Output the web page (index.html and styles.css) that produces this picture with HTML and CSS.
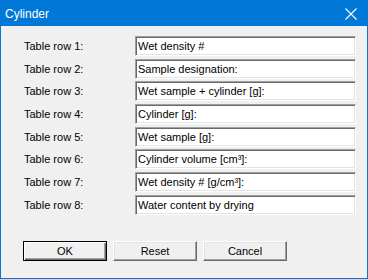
FILE: index.html
```html
<!DOCTYPE html>
<html lang="en">
<head>
    <meta charset="UTF-8">
    <title>Cylinder</title>
    <link rel="stylesheet" href="styles.css">
</head>
<body>
    <div class="window">
        <div class="titlebar">
            <span class="title">Cylinder</span>
            <svg class="close" width="12" height="12" viewBox="0 0 12 12">
                <path d="M0.5 0.5 L11.5 11.5 M11.5 0.5 L0.5 11.5" stroke="#fff" stroke-width="1.1" fill="none"/>
            </svg>
        </div>
        <div class="content">
            <div class="rows">
                <label>Table row 1:</label>
                <div class="field">Wet density #</div>
                <label>Table row 2:</label>
                <div class="field">Sample designation:</div>
                <label>Table row 3:</label>
                <div class="field">Wet sample + cylinder [g]:</div>
                <label>Table row 4:</label>
                <div class="field">Cylinder [g]:</div>
                <label>Table row 5:</label>
                <div class="field">Wet sample [g]:</div>
                <label>Table row 6:</label>
                <div class="field">Cylinder volume [cm³]:</div>
                <label>Table row 7:</label>
                <div class="field">Wet density # [g/cm³]:</div>
                <label>Table row 8:</label>
                <div class="field">Water content by drying</div>
            </div>
            <div class="buttons">
                <button class="default">OK</button>
                <button>Reset</button>
                <button>Cancel</button>
            </div>
        </div>
    </div>
</body>
</html>
```

FILE: styles.css
```css
:root {
    --title-blue: #0078d7;
    --face: #f0f0f0;
    --shadow: #a0a0a0;
    --dark: #696969;
}

html, body {
    margin: 0;
    padding: 0;
}

body {
    font-family: 'Liberation Sans', Arial, sans-serif;
    font-size: 11px;
    color: #000;
}

.window {
    width: 368px;
    height: 279px;
    box-sizing: border-box;
    border: 1px solid var(--title-blue);
    background: var(--face);
    display: flex;
    flex-direction: column;
}

.titlebar {
    height: 25px;
    background: var(--title-blue);
    color: #fff;
    display: flex;
    align-items: center;
    justify-content: space-between;
    padding: 0 10px 0 4px;
}

.title {
    font-size: 12px;
}

.content {
    padding: 10px 10px 0 22px;
}

.rows {
    display: grid;
    grid-template-columns: 112px 221px;
    grid-auto-rows: 20px;
    row-gap: 2.67px;
}

label {
    display: flex;
    align-items: center;
    padding-left: 1px;
}

.field {
    box-sizing: border-box;
    background: #fff;
    border-top: 1px solid var(--shadow);
    border-left: 1px solid var(--shadow);
    border-right: 1px solid #fff;
    border-bottom: 1px solid #fff;
    box-shadow: inset 1px 1px 0 var(--dark), inset -1px -1px 0 #e3e3e3;
    padding: 0 2px;
    line-height: 18px;
    white-space: nowrap;
    overflow: hidden;
}

.buttons {
    display: flex;
    gap: 6px;
    margin-top: 26px;
}

button {
    width: 84px;
    height: 20px;
    box-sizing: border-box;
    font: inherit;
    background: var(--face);
    border-top: 1px solid #fff;
    border-left: 1px solid #fff;
    border-right: 1px solid var(--dark);
    border-bottom: 1px solid var(--dark);
    box-shadow: inset -1px -1px 0 var(--shadow), inset 1px 1px 0 #e3e3e3;
    padding: 0;
}

button.default {
    border: 1px solid #000;
    box-shadow: inset 1px 1px 0 #fff, inset -1px -1px 0 var(--dark), inset -2px -2px 0 var(--shadow);
}
```
